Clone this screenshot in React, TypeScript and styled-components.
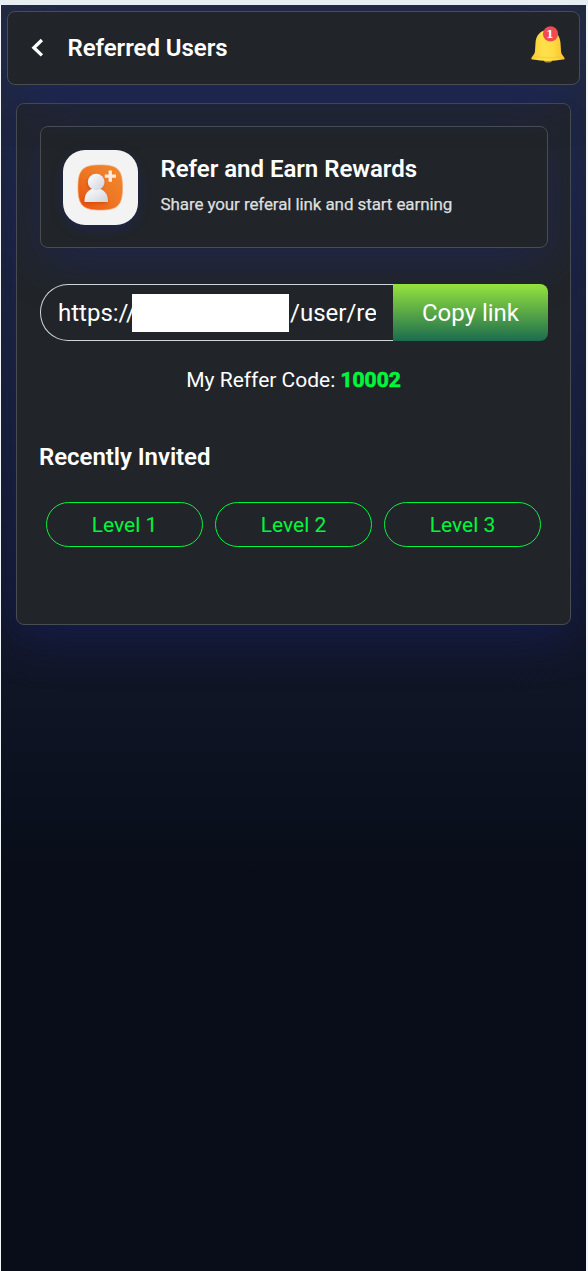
import React from "react";
import styled, { createGlobalStyle } from "styled-components";

const GlobalStyle = createGlobalStyle`
  * { box-sizing: border-box; }
  body {
    margin: 0;
    background: #fff;
    font-family: Roboto, "Liberation Sans", sans-serif;
    color: #fff;
  }
`;

const Frame = styled.div`
  height: 1271px;
  padding: 5px 2px 0 1px;
  background: linear-gradient(#e6edf3 0 5px, #f4f5f9 5px);
  overflow: hidden;
`;

const Screen = styled.main`
  height: 1266px;
  padding: 6px;
  overflow: hidden;
  background: linear-gradient(180deg, #222b3e 0, #101526 690px, #080d19 870px, #080d19 100%);
`;

const Panel = styled.section`
  background: #212529;
  border: 1px solid #494d51;
  border-radius: 8px;
  box-shadow: 0 12px 48px rgba(31, 38, 135, 0.37);
`;

const Header = styled(Panel)`
  position: relative;
  z-index: 1;
  height: 74px;
  width: 573px;
  padding: 0 13px 0 22px;
  display: flex;
  align-items: center;
`;

const BackButton = styled.button`
  width: 14px;
  height: 20px;
  padding: 0;
  border: 0;
  background: none;
  display: flex;
`;

const PageTitle = styled.h1`
  margin: 0 auto 0 23.5px;
  font-size: 24px;
  line-height: 30px;
  font-weight: 600;
  letter-spacing: -0.05px;
`;

const Card = styled(Panel)`
  width: 555px;
  height: 522px;
  margin: 18px 0 0 9px;
  padding: 22px 22px 0 23px;
`;

const Promo = styled(Panel)`
  height: 122px;
  padding: 0 22px;
  display: flex;
  align-items: center;
  gap: 22.5px;
`;

const PromoCopy = styled.div`
  padding-bottom: 2px;
`;

const IconTile = styled.div`
  width: 75px;
  height: 75px;
  border-radius: 22px;
  background: #f3f3f3;
  box-shadow: 0 4px 12px rgba(31, 38, 135, 0.37);
  overflow: hidden;
`;

const PromoTitle = styled.h2`
  margin: 0 0 7px;
  font-size: 24px;
  line-height: 29px;
  font-weight: 600;
  letter-spacing: -0.03px;
`;

const PromoText = styled.p`
  margin: 0;
  font-size: 17px;
  line-height: 27px;
  letter-spacing: -0.1px;
  color: #dedfdf;
  -webkit-text-stroke: 0.25px #dedfdf;
`;

const LinkRow = styled.div`
  display: flex;
  height: 57px;
  margin-top: 36px;
`;

const LinkField = styled.div`
  width: 353px;
  padding: 0 17px;
  display: flex;
  align-items: center;
  border: 1px solid #ced4da;
  border-right: 0;
  border-radius: 28px 0 0 28px;
  background: #212529;
  font-size: 24px;
  white-space: nowrap;
`;

const LinkStart = styled.span`
  width: 74px;
  overflow: hidden;
`;

const Mask = styled.span`
  width: 157px;
  height: 38px;
  flex: none;
  background: #fff;
`;

const LinkEnd = styled.span`
  flex: 1;
  padding-left: 1px;
  overflow: hidden;
`;

const CopyButton = styled.button`
  width: 155px;
  padding: 0;
  border: 0;
  border-radius: 0 8px 8px 0;
  background: linear-gradient(#95e33d, #1b6c4f);
  color: #fff;
  font: 400 24px Roboto, "Liberation Sans", sans-serif;
`;

const ReferCode = styled.p`
  margin: 23px 1px 0 0;
  font-size: 21px;
  line-height: 32px;
  text-align: center;
`;

const Code = styled.b`
  color: #00f63b;
  -webkit-text-stroke: 0.6px #00f63b;
`;

const SectionTitle = styled.h2`
  margin: 47px 0 0 -1px;
  font-size: 24px;
  line-height: 29px;
  font-weight: 600;
  letter-spacing: -0.05px;
`;

const Levels = styled.div`
  display: flex;
  gap: 12px;
  margin: 30px 0 0 6px;
`;

const LevelButton = styled.button`
  width: 157px;
  height: 45px;
  padding: 0;
  border: 1px solid #00f63b;
  border-radius: 23px;
  background: transparent;
  color: #00f63b;
  font: 400 21px Roboto, "Liberation Sans", sans-serif;
`;

const BellIcon = styled.svg`
  overflow: visible;
`;

const Bell = () => (
  <BellIcon width="36" height="40" viewBox="0 0 36 40">
    <defs>
      <linearGradient id="bell" x1="0" x2="1">
        <stop offset="0" stopColor="#fccb30" />
        <stop offset="0.35" stopColor="#ffe04c" />
        <stop offset="0.65" stopColor="#ffdc43" />
        <stop offset="1" stopColor="#fbbf2d" />
      </linearGradient>
    </defs>
    <g transform="translate(0 -1)">
      <ellipse cx="18" cy="33" rx="4.2" ry="2.6" fill="#b98a3c" />
      <path
        d="M18 3C10 3 5.8 9 5.5 16L5 24C4.8 26.5 4 27.5 2.8 28.8L1.5 30.7C1 31.9 1.5 32.3 2.8 32.6C12 34.4 24 34.4 33 32.6C34.6 32.3 35 31.9 34.4 30.7L33 28.8C31.8 27.3 31.2 26.5 31 24L30.5 16C30 9 26 3 18 3Z"
        fill="url(#bell)"
      />
      <path d="M4 29C12 31.2 24 31.2 32 29" fill="none" stroke="#f5c53a" strokeWidth="0.8" />
    </g>
    <circle cx="20.5" cy="5.8" r="7.6" fill="#f04b50" />
    <text x="19.8" y="9.5" textAnchor="middle" fontSize="10.5" fontWeight="700" fontFamily="DejaVu Serif, serif" fill="#fff">
      1
    </text>
  </BellIcon>
);

const InviteIcon = () => (
  <svg width="75" height="75" viewBox="0 0 75 75">
    <defs>
      <linearGradient id="tile" x1="0" y1="1" x2="1" y2="0">
        <stop offset="0" stopColor="#e9500d" />
        <stop offset="0.5" stopColor="#ef7724" />
        <stop offset="1" stopColor="#ef8b32" />
      </linearGradient>
      <linearGradient id="person" x1="0" y1="0" x2="1" y2="1">
        <stop offset="0" stopColor="#fff" />
        <stop offset="1" stopColor="#cfd2dc" />
      </linearGradient>
      <filter id="cast" x="-30%" y="-30%" width="160%" height="160%">
        <feDropShadow dx="-1" dy="1.5" stdDeviation="1.5" floodColor="#b93206" floodOpacity="0.5" />
      </filter>
    </defs>
    <path
      d="M37.3 15C54 15 59.5 19 59.5 37.5C59.5 56 54 60 37.3 60C20.5 60 15 56 15 37.5C15 19 20.5 15 37.3 15Z"
      fill="url(#tile)"
      stroke="#f5a263"
      strokeWidth="0.7"
    />
    <g fill="url(#person)" filter="url(#cast)">
      <path d="M21.5 52C21.5 43 25.5 38.5 33 38.5C40.5 38.5 45 43 45 52Z" />
      <circle cx="33.2" cy="32" r="8.3" />
    </g>
    <path d="M45.6 20.5H48.9V24.5H53V27.8H48.9V31.8H45.6V27.8H41.8V24.5H45.6Z" fill="#fbece2" />
  </svg>
);

export default function App() {
  return (
    <>
      <GlobalStyle />
      <Frame>
        <Screen>
          <Header as="header">
            <BackButton aria-label="Back">
              <svg width="14" height="20" viewBox="0 0 14 20">
                <path d="M11.9 2L3.9 9.7L11.9 17.4" fill="none" stroke="#fff" strokeWidth="3.3" />
              </svg>
            </BackButton>
            <PageTitle>Referred Users</PageTitle>
            <Bell />
          </Header>
          <Card>
            <Promo>
              <IconTile>
                <InviteIcon />
              </IconTile>
              <PromoCopy>
                <PromoTitle>Refer and Earn Rewards</PromoTitle>
                <PromoText>Share your referal link and start earning</PromoText>
              </PromoCopy>
            </Promo>
            <LinkRow>
              <LinkField>
                <LinkStart>https://</LinkStart>
                <Mask />
                <LinkEnd>/user/re</LinkEnd>
              </LinkField>
              <CopyButton>Copy link</CopyButton>
            </LinkRow>
            <ReferCode>
              My Reffer Code: <Code>10002</Code>
            </ReferCode>
            <SectionTitle>Recently Invited</SectionTitle>
            <Levels>
              {[1, 2, 3].map((level) => (
                <LevelButton key={level}>Level {level}</LevelButton>
              ))}
            </Levels>
          </Card>
        </Screen>
      </Frame>
    </>
  );
}
